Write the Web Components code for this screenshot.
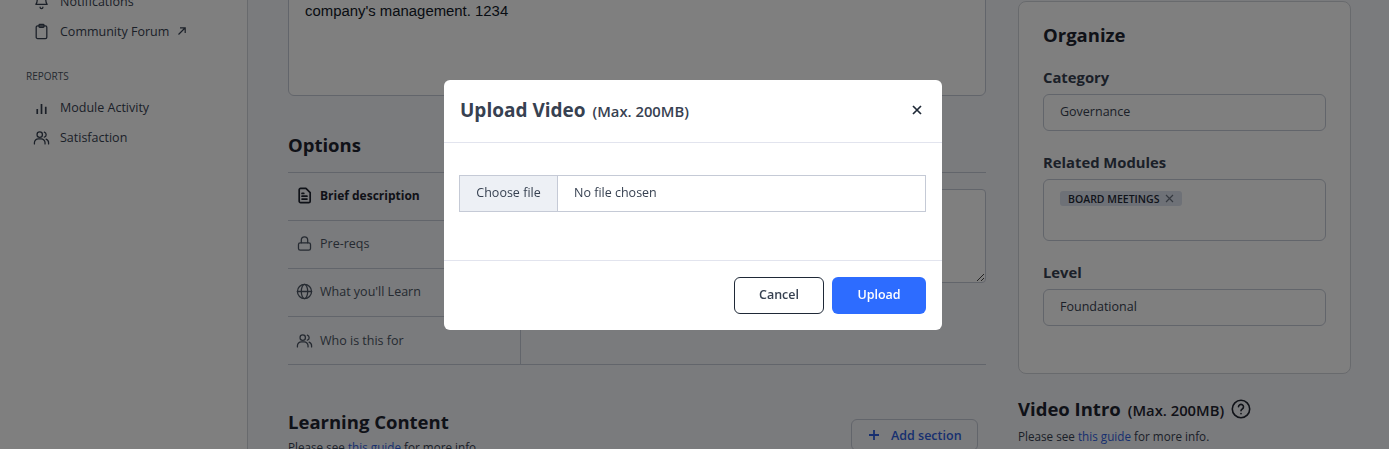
<!DOCTYPE html>
<html>
<head>
<meta charset="utf-8">
<title>Upload Video</title>
<style>
  html, body { margin: 0; height: 100%; overflow: hidden; background: #fff; }
  body { font-family: "Open Sans", "Noto Sans", sans-serif; color: #374151; }
  app-shell { height: 449px; }
</style>
</head>
<body>
<app-shell>
  <side-nav slot="nav">
    <nav-item icon="bell" class="cut">Notifications</nav-item>
    <nav-item icon="clipboard" external>Community Forum</nav-item>
    <nav-heading>REPORTS</nav-heading>
    <nav-item icon="bars">Module Activity</nav-item>
    <nav-item icon="users">Satisfaction</nav-item>
  </side-nav>

  <main-column slot="main">
    <text-box>company's management. 1234</text-box>
    <section-title class="options">Options</section-title>
    <options-table>
      <option-row icon="doc" active>Brief description</option-row>
      <option-row icon="lock">Pre-reqs</option-row>
      <option-row icon="globe">What you'll Learn</option-row>
      <option-row icon="users">Who is this for</option-row>
    </options-table>
    <content-head></content-head>
  </main-column>

  <side-column slot="side">
    <organize-card>
      <field-box label="Category">Governance</field-box>
      <field-box label="Related Modules" tall><tag-chip>BOARD MEETINGS</tag-chip></field-box>
      <field-box label="Level">Foundational</field-box>
    </organize-card>
    <video-intro></video-intro>
  </side-column>
</app-shell>

<upload-modal></upload-modal>

<script>
const ICONS = {
  bell: '<path d="M6 9a6 6 0 0 1 12 0c0 5 2 7 2 7H4s2-2 2-7"/><path d="M10 20a2 2 0 0 0 4 0"/>',
  clipboard: '<rect x="4.500" y="4" width="15" height="18" rx="2"/><rect x="8.500" y="2" width="7" height="4" rx="1"/>',
  bars: '<path d="M6 21v-7M12 21V7M18 21v-10" stroke-width="2.400" stroke-linecap="butt"/>',
  users: '<circle cx="9.500" cy="8" r="3.800"/><path d="M2 21v-1.500A5.500 5.500 0 0 1 7.500 14h4a5.500 5.500 0 0 1 5.500 5.500V21"/><path d="M16 4.400a3.800 3.800 0 0 1 0 7.200M18.500 14.300A5.500 5.500 0 0 1 22 19.500V21"/>',
  doc: '<path d="M6.500 2h7.500l6 6v12a2 2 0 0 1-2 2H6.500a2 2 0 0 1-2-2V4a2 2 0 0 1 2-2z"/><path d="M8.500 9h2.500M8.500 13h7M8.500 17h7"/>',
  lock: '<rect x="3.500" y="11" width="17" height="10.500" rx="2.500"/><path d="M7.500 11V7a4.500 4.500 0 0 1 9 0v4"/>',
  globe: '<circle cx="12" cy="12" r="10"/><path d="M2 12h20"/><ellipse cx="12" cy="12" rx="4.500" ry="10"/>',
};

const icon = (name, size, weight = 1.8) =>
  `<svg width="${size}" height="${size}" viewBox="0 0 24 24" fill="none" stroke="currentColor" stroke-width="${weight}" stroke-linecap="round" stroke-linejoin="round">${ICONS[name]}</svg>`;

// small helper, every element here is just a styled shadow root
const define = (tag, render) => {
  customElements.define(tag, class extends HTMLElement {
    constructor () {
      super();
      this.attachShadow({ mode: 'open' }).innerHTML = render(this);
    }
  });
};

define('app-shell', () => `
  <style>
    :host { display: grid; grid-template-columns: 248px 738px 365px; background: #f5f6fa; overflow: hidden; }
    .nav { background: #fff; border-right: 1px solid #d1d5db; box-sizing: border-box; height: 449px; }
    .main { padding-left: 40px; width: 698px; }
    .side { padding-left: 32px; width: 333px; }
  </style>
  <div class="nav"><slot name="nav"></slot></div>
  <div class="main"><slot name="main"></slot></div>
  <div class="side"><slot name="side"></slot></div>
`);

define('side-nav', () => `
  <style>:host { display: block; margin-top: -14px; padding-left: 26px; }</style>
  <slot></slot>
`);

define('nav-item', el => `
  <style>
    :host { display: flex; align-items: center; height: 30px; font-size: 12.500px; color: #374151; }
    .ic { width: 34px; display: flex; padding-left: 7px; box-sizing: border-box; }
    .ext { margin-left: 8px; display: flex; }
  </style>
  <span class="ic">${icon(el.getAttribute('icon'), 17)}</span>
  <slot></slot>
  ${el.hasAttribute('external') ? `<span class="ext"><svg width="10" height="10" viewBox="0 0 10 10" fill="none" stroke="currentColor" stroke-width="1.200"><path d="M1.500 8.500L8 2M3 1.800h5.200V7"/></svg></span>` : ''}
`);

define('nav-heading', () => `
  <style>:host { display: block; margin: 23px 0 9px; font-size: 10px; line-height: 14px; color: #4b5563; }</style>
  <slot></slot>
`);

define('main-column', () => `
  <style>:host { display: block; }</style>
  <slot></slot>
`);

define('text-box', () => `
  <style>
    :host { display: block; box-sizing: border-box; height: 116px; margin-top: -20px; padding: 19px 16px 0; background: #fff;
      border: 1px solid #c5cad6; border-radius: 6px; font: 14.900px/22px "Liberation Sans", sans-serif; color: #111827; }
  </style>
  <slot></slot>
`);

define('section-title', () => `
  <style>:host { display: block; margin: 35px 0 14px; font-size: 18.500px; line-height: 27px; font-weight: 700; color: #1f2430; }</style>
  <slot></slot>
`);

define('options-table', () => `
  <style>
    :host { display: grid; grid-template-columns: 233px 1fr; width: 698px; border-bottom: 1px solid #c5cad6; border-top: 1px solid #c5cad6; box-sizing: border-box; height: 193px; }
    .tabs { display: flex; flex-direction: column; border-right: 1px solid #c5cad6; }
    .pane { padding: 16px 0 0 16px; }
    .area { position: relative; height: 94px; box-sizing: border-box; background: #fff; border: 1px solid #c5cad6; border-radius: 4px; }
    .area svg { position: absolute; right: 1px; bottom: 1px; }
  </style>
  <div class="tabs"><slot></slot></div>
  <div class="pane"><div class="area">
    <svg width="8" height="8" viewBox="0 0 8 8" fill="none" stroke="#444" stroke-width="1"><path d="M1 8l7-7M5 8l3-3"/></svg>
  </div></div>
`);

define('option-row', el => `
  <style>
    :host { display: flex; align-items: center; box-sizing: border-box; height: 48px; padding: 0 0 2px 8px; border-bottom: 1px solid #c5cad6;
      font-size: ${el.hasAttribute('active') ? 12 : 12.500}px; color: ${el.hasAttribute('active') ? '#1f2430' : '#4b5563'}; font-weight: ${el.hasAttribute('active') ? 700 : 400}; }
    :host(:last-child) { border-bottom: 0; }
    .ic { display: flex; width: 24px; }
  </style>
  <span class="ic">${icon(el.getAttribute('icon'), 17, el.hasAttribute('active') ? 2.4 : 1.8)}</span>
  <slot></slot>
`);

define('content-head', () => `
  <style>
    :host { display: flex; justify-content: space-between; align-items: flex-start; width: 690px; margin-top: 43px; }
    h2 { margin: 0; font-size: 18.500px; line-height: 27px; font-weight: 700; color: #1f2430; }
    p { margin: 4px 0 0; font-size: 11.700px; line-height: 17px; color: #374151; }
    a { color: #2f5fe0; text-decoration: none; }
    .add { display: flex; align-items: center; gap: 11px; box-sizing: border-box; width: 127px; height: 32px; padding-left: 16px; margin-top: 11px;
      border: 1px solid #c5cad6; border-radius: 6px; background: #f5f6fa; color: #2f5fe0; font-size: 12.500px; font-weight: 600; }
  </style>
  <div>
    <h2>Learning Content</h2>
    <p>Please see <a>this guide</a> for more info.</p>
  </div>
  <div class="add">
    <svg width="12" height="12" viewBox="0 0 12 12" fill="none" stroke="currentColor" stroke-width="1.800"><path d="M6 1v10M1 6h10"/></svg>
    Add section
  </div>
`);

define('side-column', () => `
  <style>:host { display: block; }</style>
  <slot></slot>
`);

define('organize-card', () => `
  <style>
    :host { display: block; box-sizing: border-box; width: 333px; height: 373px; margin-top: 1px; padding: 19px 24px 0; background: #fff;
      border: 1px solid #d1d5db; border-radius: 8px; }
    h2 { margin: 0 0 19px; font-size: 18.500px; line-height: 27px; font-weight: 700; color: #1f2430; }
  </style>
  <h2>Organize</h2>
  <slot></slot>
`);

define('field-box', el => `
  <style>
    :host { display: block; margin-bottom: 21px; }
    label { display: block; font-size: 14.800px; line-height: 20px; font-weight: 700; color: #374151; margin-bottom: 7px; }
    .box { box-sizing: border-box; width: 283px; height: ${el.hasAttribute('tall') ? 62 : 37}px; padding: ${el.hasAttribute('tall') ? '11px' : '8px'} 16px 0;
      border: 1px solid #c5cad6; border-radius: 6px; background: #fff; font-size: 12.500px; line-height: 18px; color: #374151; }
  </style>
  <label>${el.getAttribute('label')}</label>
  <div class="box"><slot></slot></div>
`);

define('tag-chip', () => `
  <style>
    :host { display: inline-flex; align-items: center; gap: 6px; height: 15px; padding: 0 8px; border-radius: 3px; background: #dde3ee;
      font-size: 10.500px; font-weight: 600; color: #1f2937; vertical-align: top; }
    svg { color: #6b7280; }
  </style>
  <slot></slot>
  <svg width="9" height="9" viewBox="0 0 9 9" fill="none" stroke="currentColor" stroke-width="1.200"><path d="M1 1l7 7M8 1L1 8"/></svg>
`);

define('video-intro', () => `
  <style>
    :host { display: block; margin-top: 21px; }
    .head { display: flex; align-items: center; height: 27px; color: #1f2430; }
    b { font-size: 18.500px; font-weight: 700; }
    span { font-size: 14.800px; font-weight: 600; margin: 2px 7px 0 7px; }
    p { margin: 6px 0 0; font-size: 11.700px; line-height: 17px; color: #374151; }
    a { color: #2f5fe0; }
  </style>
  <div class="head">
    <b>Video Intro</b><span>(Max. 200MB)</span>
    <svg width="20" height="20" viewBox="0 0 20 20" fill="none" stroke="currentColor" stroke-width="1.600" stroke-linecap="round"><circle cx="10" cy="10" r="8.700"/><path d="M7.500 7.800a2.500 2.500 0 1 1 3.800 2.200c-.8.500-1.300 1-1.300 1.800"/><path d="M10 14.600v.1"/></svg>
  </div>
  <p>Please see <a>this guide</a> for more info.</p>
`);

define('upload-modal', () => `
  <style>
    :host { position: fixed; inset: 0; display: flex; align-items: flex-start; background: rgba(0, 0, 0, 0.5); }
    .modal { width: 498px; height: 250px; margin: 80px 0 0 444px; background: #fff; border-radius: 6px; display: flex; flex-direction: column; }
    header { display: flex; align-items: center; justify-content: space-between; box-sizing: border-box; height: 63px; padding: 0 20px 3px 16px; border-bottom: 1px solid #e2e4ee; color: #374151; }
    h3 { margin: 0; font-size: 19px; font-weight: 700; }
    h3 span { font-size: 14.800px; font-weight: 600; margin-left: 2px; }
    .body { flex: 1; padding: 32px 16px 0 15px; border-bottom: 1px solid #e2e4ee; }
    .file { display: flex; height: 37px; box-sizing: border-box; border: 1px solid #c5cad6; font-size: 12.500px; color: #374151; }
    .file b { display: flex; align-items: center; justify-content: center; width: 98px; padding-bottom: 2px; box-sizing: border-box; background: #edf0f5; border-right: 1px solid #c5cad6; font-weight: 400; }
    .file span { display: flex; align-items: center; padding: 0 0 2px 16px; }
    footer { display: flex; justify-content: flex-end; gap: 8px; height: 69px; box-sizing: border-box; padding: 16px 16px 0 0; }
    button { height: 37px; box-sizing: border-box; padding-bottom: 3px; border-radius: 6px; font: 600 12.500px "Open Sans", sans-serif; }
    .cancel { width: 90px; background: #fff; border: 1px solid #1f2937; color: #374151; }
    .upload { width: 94px; background: #2d6cff; border: 0; color: #fff; }
  </style>
  <div class="modal">
    <header>
      <h3>Upload Video <span>(Max. 200MB)</span></h3>
      <svg width="10" height="10" viewBox="0 0 10 10" fill="none" stroke="#1f2937" stroke-width="1.700"><path d="M1 1l8 8M9 1L1 9"/></svg>
    </header>
    <div class="body">
      <div class="file"><b>Choose file</b><span>No file chosen</span></div>
    </div>
    <footer>
      <button class="cancel">Cancel</button>
      <button class="upload">Upload</button>
    </footer>
  </div>
`);
</script>
</body>
</html>
